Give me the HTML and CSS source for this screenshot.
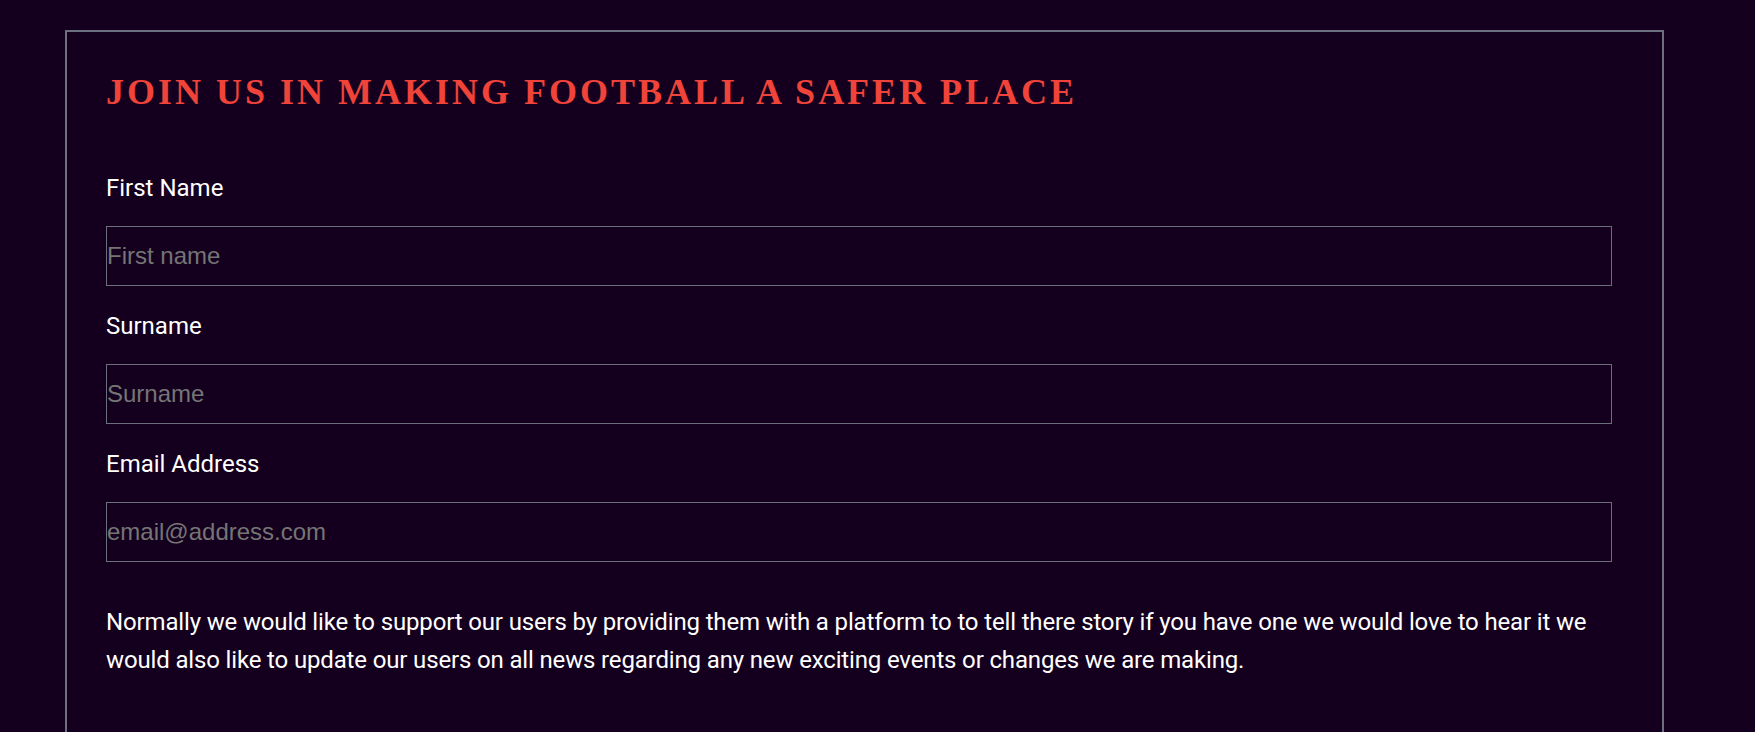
FILE: index.html
```html
<!DOCTYPE html>
<html lang="en">
<head>
<meta charset="utf-8">
<title>Join us</title>
<link rel="stylesheet" href="styles.css">
</head>
<body>
<main class="page">
  <section class="card">
    <h1 class="title">JOIN US IN MAKING FOOTBALL A SAFER PLACE</h1>
    <form class="signup">
      <div class="field">
        <label class="label" for="first">First Name</label>
        <input class="input" id="first" type="text" placeholder="First name">
      </div>
      <div class="field">
        <label class="label" for="surname">Surname</label>
        <input class="input" id="surname" type="text" placeholder="Surname">
      </div>
      <div class="field">
        <label class="label" for="email">Email Address</label>
        <input class="input" id="email" type="email" placeholder="email@address.com">
      </div>
      <p class="note">Normally we would like to support our users by providing them with a platform to to tell there story if you have one we would love to hear it we would also like to update our users on all news regarding any new exciting events or changes we are making.</p>
    </form>
  </section>
</main>
</body>
</html>
```
FILE: styles.css
```css
html, body {
  margin: 0;
  padding: 0;
  background: #14001e;
}

body {
  font-family: Roboto, "Liberation Sans", sans-serif;
  color: #ffffff;
}

.page {
  padding: 30px 0 0 65px;
}

.card {
  box-sizing: border-box;
  width: 1599px;
  min-height: 760px;
  border: 2px solid #6c6f7d;
  padding: 40px 50px 60px 39px;
}

.title {
  margin: 0 0 61px 0;
  font-family: "Liberation Serif", "Times New Roman", serif;
  font-weight: 700;
  font-size: 36px;
  line-height: 40px;
  letter-spacing: 3px;
  color: #f0433a;
}

.signup {
  display: flex;
  flex-direction: column;
}

.field {
  display: flex;
  flex-direction: column;
}

.field + .field {
  margin-top: 25px;
}

.label {
  font-size: 24px;
  line-height: 30px;
  color: #ffffff;
}

.input {
  box-sizing: border-box;
  margin-top: 23px;
  width: 100%;
  height: 60px;
  padding: 0;
  border: 1px solid #6b6f7a;
  border-radius: 0;
  background: transparent;
  color: #ffffff;
  font-family: "Liberation Sans", Arial, sans-serif;
  font-size: 24px;
  outline: none;
}

.input::placeholder {
  color: #757575;
  opacity: 1;
}

.note {
  margin: 41px 0 0 0;
  font-size: 24px;
  line-height: 38.4px;
  letter-spacing: -0.15px;
  color: #ffffff;
}
```
